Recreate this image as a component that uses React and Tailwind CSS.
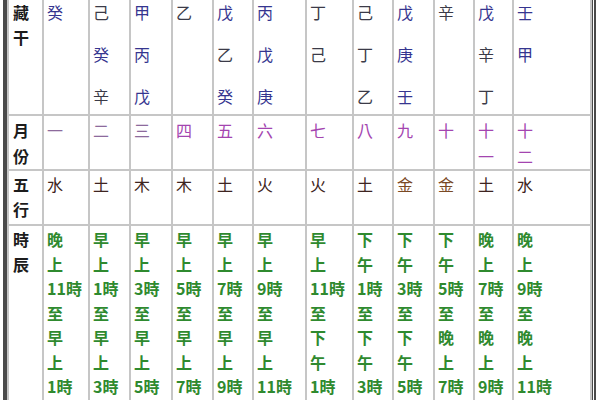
const FONT = "font-['Noto_Sans_CJK_TC','Noto_Sans_CJK_SC',sans-serif]"

const BLUE = 'text-[#35358f]'
const DARK = 'text-[#3b3b48]'
const stemColor = {
  甲: BLUE, 乙: DARK, 丙: BLUE, 丁: DARK, 戊: BLUE,
  己: DARK, 庚: BLUE, 辛: DARK, 壬: BLUE, 癸: BLUE,
}

const hidden = [
  ['癸'], ['己', '癸', '辛'], ['甲', '丙', '戊'], ['乙'], ['戊', '乙', '癸'], ['丙', '戊', '庚'],
  ['丁', '己'], ['己', '丁', '乙'], ['戊', '庚', '壬'], ['辛'], ['戊', '辛', '丁'], ['壬', '甲'],
]

const months = [
  ['一'], ['二'], ['三'], ['四'], ['五'], ['六'], ['七'], ['八'], ['九'], ['十'], ['十', '一'], ['十', '二'],
]

const elements = ['水', '土', '木', '木', '土', '火', '火', '土', '金', '金', '土', '水']

const hours = [
  ['晚', '上', '11時', '至', '早', '上', '1時'],
  ['早', '上', '1時', '至', '早', '上', '3時'],
  ['早', '上', '3時', '至', '早', '上', '5時'],
  ['早', '上', '5時', '至', '早', '上', '7時'],
  ['早', '上', '7時', '至', '早', '上', '9時'],
  ['早', '上', '9時', '至', '早', '上', '11時'],
  ['早', '上', '11時', '至', '下', '午', '1時'],
  ['下', '午', '1時', '至', '下', '午', '3時'],
  ['下', '午', '3時', '至', '下', '午', '5時'],
  ['下', '午', '5時', '至', '晚', '上', '7時'],
  ['晚', '上', '7時', '至', '晚', '上', '9時'],
  ['晚', '上', '9時', '至', '晚', '上', '11時'],
]

const widths = [35, 46, 41, 42, 41, 40, 53, 47, 40, 41, 40, 39, 78]

const td = 'border-2 border-[#c6c6c6] align-top p-0 pl-[3px] overflow-hidden'

function Label({ a, b, lead }) {
  return (
    <td className={`${td} pl-[4px] text-[#1c1c1c] font-bold ${lead}`}>
      <div>{a}</div>
      <div>{b}</div>
    </td>
  )
}

export default function App() {
  return (
    <div className={`w-[600px] h-[400px] overflow-hidden bg-white ${FONT} text-[16px]`}>
      <div className="ml-[3px] w-[593px] mt-[-2px] border-l-4 border-l-[#4a4a4a] border-r-[5px] border-r-[#4a4a4a] [border-right-style:double]">
        <table className="table-fixed border-collapse w-[584px]">
          <colgroup>
            {widths.map((w, i) => (
              <col key={i} style={{ width: w }} />
            ))}
          </colgroup>
          <tbody>
            <tr className="h-[116px]">
              <Label a="藏" b="干" lead="leading-[25px]" />
              {hidden.map((col, i) => (
                <td key={i} className={`${td} leading-[25px]`}>
                  <div className="flex flex-col gap-[17px]">
                    {col.map((c, j) => (
                      <div key={j} className={stemColor[c]}>{c}</div>
                    ))}
                  </div>
                </td>
              ))}
            </tr>
            <tr className="h-[55px]">
              <Label a="月" b="份" lead="leading-[26px] pt-[1px]" />
              {months.map((m, i) => (
                <td key={i} className={`${td} leading-[26px] pt-[1px] ${i < 3 ? 'text-[#8d6a9c]' : 'text-[#a445b0]'}`}>
                  {m.map((c, j) => (
                    <div key={j}>{c}</div>
                  ))}
                </td>
              ))}
            </tr>
            <tr className="h-[55px]">
              <Label a="五" b="行" lead="leading-[25px] pt-[1px]" />
              {elements.map((e, i) => (
                <td key={i} className={`${td} leading-[25px] pt-[1px] ${e === '金' ? 'text-[#7a4a24]' : 'text-[#3e2420]'}`}>
                  {e}
                </td>
              ))}
            </tr>
            <tr className="h-[180px]">
              <Label a="時" b="辰" lead="leading-[24.5px] pt-[1px]" />
              {hours.map((h, i) => (
                <td key={i} className={`${td} leading-[24.5px] pt-[1px] pl-[2px] text-[#2f8a2f] font-bold whitespace-nowrap`}>
                  {h.map((c, j) => (
                    <div key={j}>{c}</div>
                  ))}
                </td>
              ))}
            </tr>
          </tbody>
        </table>
      </div>
    </div>
  )
}
